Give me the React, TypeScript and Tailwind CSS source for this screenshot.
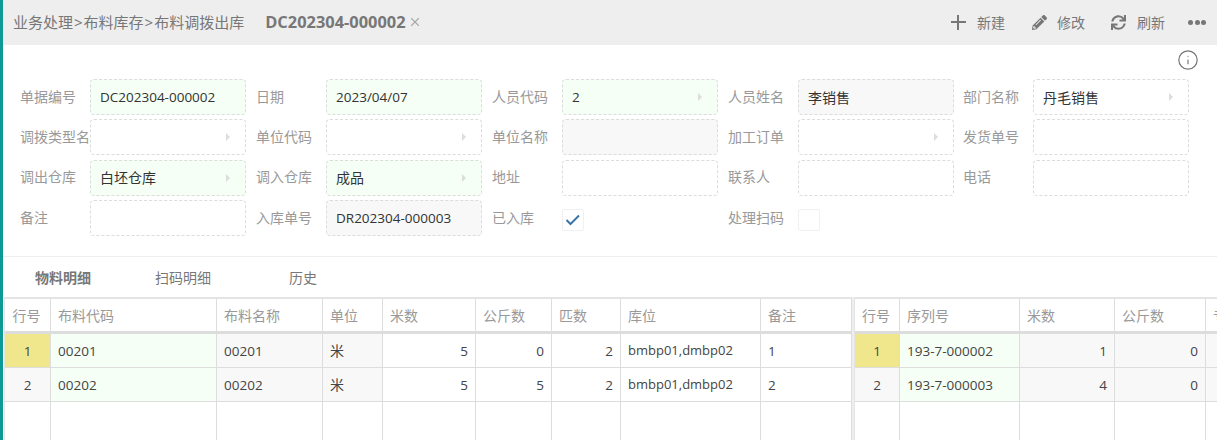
import React from "react";
import { Info, X } from "lucide-react";
import { FaPencilAlt, FaSync } from "react-icons/fa";

const font = '"Open Sans","Noto Sans CJK SC",sans-serif';
const isCjk = (s?: string) => !!s && /[^\x00-\x7F]/.test(s);

type FieldProps = { label: string; value?: string; bg?: "green" | "gray" | "white"; arrow?: boolean; narrow?: boolean };

function Field({ label, value, bg = "white", arrow, narrow }: FieldProps) {
  const bgClass = bg === "green" ? "bg-[#f5fff5]" : bg === "gray" ? "bg-[#f8f8f8]" : "bg-white";
  return (
    <div className={`flex shrink-0 items-center ${narrow ? "w-[235px]" : "w-[236px]"}`}>
      <div className="mb-[2px] w-[70px] shrink-0 whitespace-nowrap text-[14px] text-[#999999]">{label}</div>
      <div className={`flex h-[36px] w-[156px] items-center justify-between rounded-[4px] border border-dashed border-[#dcdcdc] pl-[9px] pr-[15px] ${bgClass}`}>
        <span className={`text-[#333333] ${isCjk(value) ? "text-[14px]" : "text-[13.5px]"}`}>{value}</span>
        {arrow && <span className="h-0 w-0 border-y-[4px] border-l-[4px] border-y-transparent border-l-[#dddddd]" />}
      </div>
    </div>
  );
}

function Check({ label, checked }: { label: string; checked?: boolean }) {
  return (
    <div className="flex w-[236px] shrink-0 items-center">
      <div className="mb-[2px] w-[70px] shrink-0 text-[14px] text-[#999999]">{label}</div>
      <div className="mt-[4px] flex h-[22px] w-[22px] items-center justify-center rounded-[2px] border border-[#f0f0f0] bg-white">
        {checked && (
          <svg width="16" height="12" viewBox="0 0 16 12" fill="none">
            <path d="M1.5 6 L5.5 10 L14 1.5" stroke="#3a76a8" strokeWidth="2" />
          </svg>
        )}
      </div>
    </div>
  );
}

type Cell = { t?: string; c?: string; right?: boolean; center?: boolean; small?: boolean };

function Row({ cols, cells }: { cols: number[]; cells: Cell[] }) {
  return (
    <div className="flex h-[34px] border-b border-[#dddddd]">
      {cells.map((cell, i) => (
        <div
          key={i}
          style={{ width: cols[i] }}
          className={`flex shrink-0 items-center border-r border-[#dddddd] px-[7px] text-[#444444] ${cell.small ? "text-[13px]" : isCjk(cell.t) ? "text-[14px]" : "text-[13.5px]"} ${cell.c ?? "bg-white"} ${cell.right ? "justify-end" : ""} ${cell.center ? "justify-center" : ""}`}
        >
          {cell.t}
        </div>
      ))}
    </div>
  );
}

function Grid({ cols, header, rows, width }: { cols: number[]; header: string[]; rows: Cell[][]; width: string }) {
  return (
    <div className={`${width} h-full shrink-0 overflow-hidden border-t-2 border-l border-[#e4e4e4]`}>
      <div className="flex h-[35px] border-b-[3px] border-[#dddddd]">
        {header.map((x, i) => (
          <div
            key={i}
            style={{ width: cols[i] }}
            className={`flex shrink-0 items-center whitespace-nowrap border-r border-[#dddddd] text-[14px] text-[#999999] ${i === 0 ? "justify-center pr-[2px]" : "px-[7px]"}`}
          >
            {x}
          </div>
        ))}
      </div>
      {rows.map((r, i) => (
        <Row key={i} cols={cols} cells={r} />
      ))}
      <div className="flex h-[60px]">
        {cols.map((w, i) => (
          <div key={i} style={{ width: w }} className="h-full shrink-0 border-r border-[#dddddd]" />
        ))}
      </div>
    </div>
  );
}

const gray = "bg-[#f8f8f8]";
const green = "bg-[#f5fff5]";
const yellow = "bg-[#f0e68c]";

const leftCols = [46, 166, 106, 60, 93, 76, 69, 140, 91];
const leftRows: Cell[][] = [
  [
    { t: "1", c: yellow, center: true },
    { t: "00201", c: green },
    { t: "00201", c: gray },
    { t: "米", c: gray },
    { t: "5", right: true },
    { t: "0", right: true },
    { t: "2", right: true },
    { t: "bmbp01,dmbp02", small: true },
    { t: "1" },
  ],
  [
    { t: "2", c: gray, center: true },
    { t: "00202", c: green },
    { t: "00202", c: gray },
    { t: "米", c: gray },
    { t: "5", right: true },
    { t: "5", right: true },
    { t: "2", right: true },
    { t: "bmbp01,dmbp02", small: true },
    { t: "2" },
  ],
];

const rightCols = [45, 120, 95, 91, 20];
const rightRows: Cell[][] = [
  [
    { t: "1", c: yellow, center: true },
    { t: "193-7-000002", c: green },
    { t: "1", c: gray, right: true },
    { t: "0", c: gray, right: true },
    { c: gray },
  ],
  [
    { t: "2", c: gray, center: true },
    { t: "193-7-000003", c: green },
    { t: "4", c: gray, right: true },
    { t: "0", c: gray, right: true },
    { c: gray },
  ],
];

export default function App() {
  return (
    <div className="flex h-[440px] w-[1217px] overflow-hidden bg-white" style={{ fontFamily: font }}>
      <div className="h-full w-[3px] shrink-0 bg-[#0e9a94]" />
      <div className="flex min-w-0 flex-1 flex-col">
        <header className="flex h-[45px] shrink-0 items-center justify-between bg-[#eeeeee] pl-[10px] pr-[11px]">
          <div className="flex items-center">
            <span className="text-[15px] text-[#777777]">
              业务处理<span className="mx-[1px]">&gt;</span>布料库存<span className="mx-[1px]">&gt;</span>布料调拨出库
            </span>
            <span className="ml-[21px] text-[16.4px] font-bold text-[#777777]">DC202304-000002</span>
            <X size={14} className="ml-[2px] text-[#aaaaaa]" />
          </div>
          <div className="flex items-center text-[14px] text-[#777777]">
            <span className="relative h-[15px] w-[15px]">
              <i className="absolute left-[6px] top-0 h-[15px] w-[2px] bg-[#777777]" />
              <i className="absolute left-0 top-[6px] h-[2px] w-[15px] bg-[#777777]" />
            </span>
            <span className="ml-[11px]">新建</span>
            <FaPencilAlt size={15} className="ml-[27px] text-[#777777]" />
            <span className="ml-[10px]">修改</span>
            <FaSync size={15} className="ml-[26px] text-[#777777]" />
            <span className="ml-[11px]">刷新</span>
            <span className="ml-[23px] flex gap-[1.5px]">
              <i className="h-[5px] w-[5px] rounded-full bg-[#777777]" />
              <i className="h-[5px] w-[5px] rounded-full bg-[#777777]" />
              <i className="h-[5px] w-[5px] rounded-full bg-[#777777]" />
            </span>
          </div>
        </header>

        <div className="flex h-[34px] shrink-0 items-start justify-end pr-[18px] pt-[4px]">
          <Info size={22} strokeWidth={1.3} className="text-[#777777]" />
        </div>

        <div className="flex flex-col gap-[4.4px] pl-[17px]">
          <div className="flex">
            <Field label="单据编号" value="DC202304-000002" bg="green" />
            <Field label="日期" value="2023/04/07" bg="green" />
            <Field label="人员代码" value="2" bg="green" arrow />
            <Field label="人员姓名" value="李销售" bg="gray" narrow />
            <Field label="部门名称" value="丹毛销售" arrow />
          </div>
          <div className="flex">
            <Field label="调拨类型名" arrow />
            <Field label="单位代码" arrow />
            <Field label="单位名称" bg="gray" />
            <Field label="加工订单" arrow narrow />
            <Field label="发货单号" />
          </div>
          <div className="flex">
            <Field label="调出仓库" value="白坯仓库" bg="green" arrow />
            <Field label="调入仓库" value="成品" bg="green" arrow />
            <Field label="地址" />
            <Field label="联系人" narrow />
            <Field label="电话" />
          </div>
          <div className="flex">
            <Field label="备注" />
            <Field label="入库单号" value="DR202304-000003" bg="gray" />
            <Check label="已入库" checked />
            <Check label="处理扫码" />
          </div>
        </div>

        <div className="mt-[20px] flex h-[41px] shrink-0 items-center border-t border-[#eeeeee] pl-[32px] text-[14px] text-[#777777]">
          <span className="w-[120px] font-bold">物料明细</span>
          <span className="w-[134px]">扫码明细</span>
          <span>历史</span>
        </div>

        <div className="flex min-h-0 flex-1 pl-[1px]">
          <Grid cols={leftCols} header={["行号", "布料代码", "布料名称", "单位", "米数", "公斤数", "匹数", "库位", "备注"]} rows={leftRows} width="w-[848px]" />
          <div className="h-full w-[2px] shrink-0 bg-[#eeeeee]" />
          <Grid cols={rightCols} header={["行号", "序列号", "米数", "公斤数", "专"]} rows={rightRows} width="w-[364px]" />
        </div>
      </div>
    </div>
  );
}
